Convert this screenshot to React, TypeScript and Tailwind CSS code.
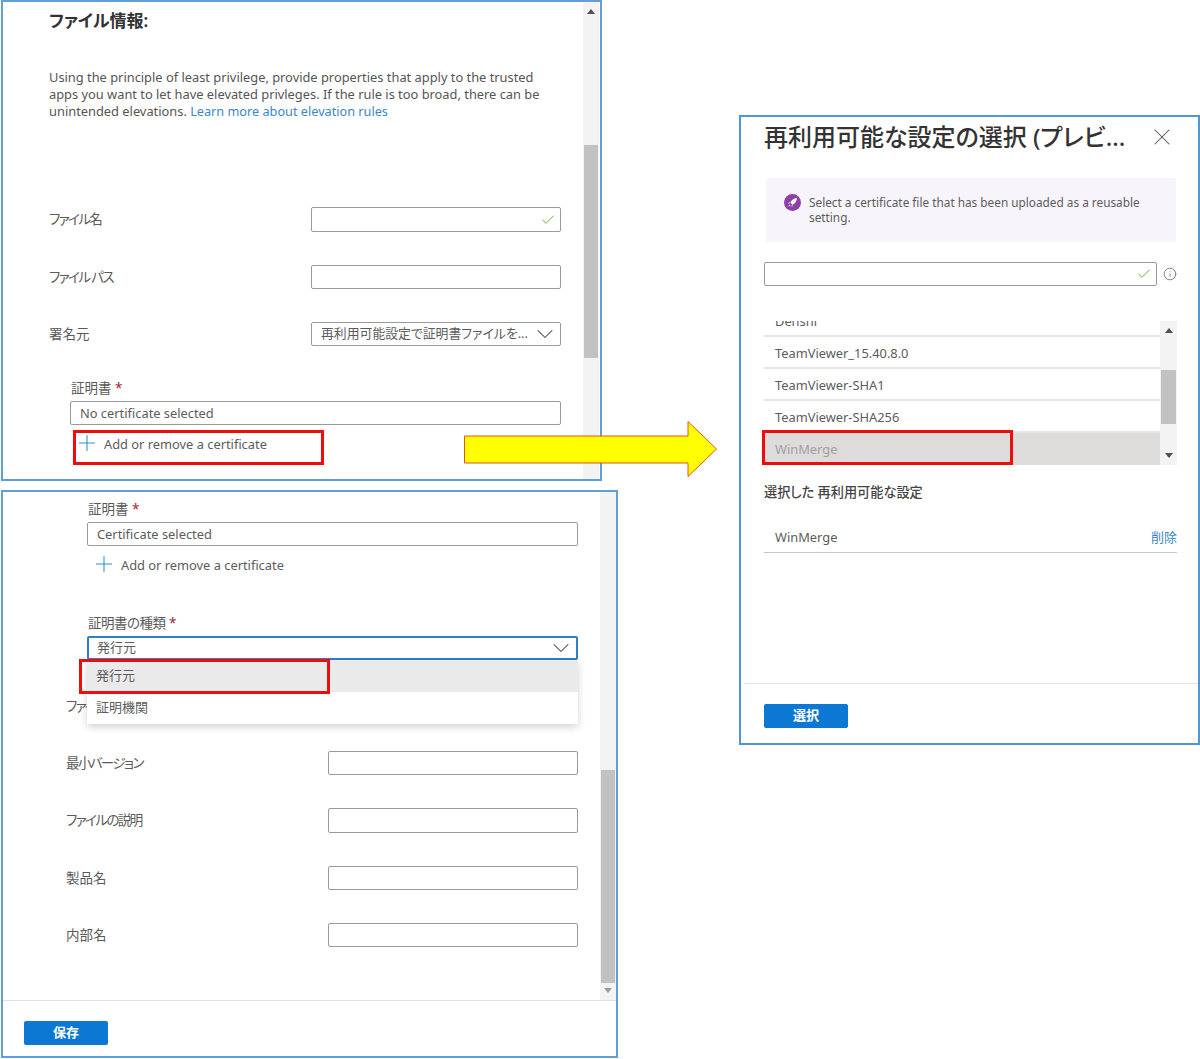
import { ReactNode } from "react"
import { Check, ChevronDown, Info, Plus, X } from "lucide-react"

const font = "font-['Noto_Sans','Noto_Sans_CJK_JP',sans-serif] [font-feature-settings:'palt']"

function TextBox({ width, check, children, height = "h-[25px]" }: { width: string, check?: boolean, children?: ReactNode, height?: string }) {
    return (
        <div className={`${width} ${height} flex items-center justify-between rounded-[2px] bg-white px-[9px] border border-[#9a9a9a]`}>
            <span className="text-[12.85px] leading-[16px] text-[#5c5c5c]">{children}</span>
            {check && <Check size={16} strokeWidth={1.5} className="text-[#6fb13f] -mr-[5px] shrink-0" />}
        </div>
    )
}

function Row({ label, tight, className, children }: { label: string, tight?: boolean, className?: string, children: ReactNode }) {
    return (
        <div className={`flex items-center justify-between ${className ?? ""}`}>
            <span className={`text-[13.5px] text-[#5a5a5a] ${tight ? "tracking-[-1.6px]" : ""}`}>{label}</span>
            {children}
        </div>
    )
}

function Required({ label, tight }: { label: string, tight?: boolean }) {
    return (
        <p className="text-[13.5px] leading-[16px] text-[#5a5a5a]">
            <span className={tight ? "tracking-[-0.5px]" : ""}>{label}</span> <span className="text-[#a4262c]">*</span>
        </p>
    )
}

function AddCertificate() {
    return (
        <div className="flex items-center h-[20px] pl-[4px] gap-[4px]">
            <Plus size={26} strokeWidth={1} className="text-[#2f8fd8] -my-[3px] -translate-y-[1px]" />
            <span className="mt-[1px] text-[12.85px] text-[#5c5c5c]">Add or remove a certificate</span>
        </div>
    )
}

function Arrow({ dir, color }: { dir: "up" | "down", color: string }) {
    return (
        <svg width="8" height="5" viewBox="0 0 8 5" className="shrink-0">
            <path d={dir === "up" ? "M4 0 L8 5 L0 5 Z" : "M0 0 L8 0 L4 5 Z"} fill={color} />
        </svg>
    )
}

function Scroll({ className, top, thumb, up, down }: { className: string, top: string, thumb: string, up?: string, down?: string }) {
    return (
        <div className={`relative shrink-0 bg-[#f3f3f3] ${className}`}>
            <div className={`absolute inset-x-[1px] bg-[#c2c2c2] ${top} ${thumb}`} />
            {up && <div className="absolute top-[7px] inset-x-0 flex justify-center"><Arrow dir="up" color={up} /></div>}
            {down && <div className="absolute bottom-[7px] inset-x-0 flex justify-center"><Arrow dir="down" color={down} /></div>}
        </div>
    )
}

function RedBox({ className }: { className: string }) {
    return <div className={`absolute border-[3px] border-[#ee0c0c] ${className}`} />
}

function BlueButton({ label }: { label: string }) {
    return (
        <div className="w-[84px] h-[24px] rounded-[2px] bg-[#0d78d4] flex items-center justify-center text-[13px] font-bold text-white">
            {label}
        </div>
    )
}

function TopPanel() {
    return (
        <div className="absolute left-[1px] top-0 w-[601px] h-[481px] border-2 border-[#5f9fd6] flex bg-white overflow-hidden">
            <div className="flex-1 pl-[46px] pr-[22px] pt-[7px]">
                <h2 className="text-[17px] leading-[24px] font-semibold text-[#323232]">ファイル情報:</h2>
                <p className="mt-[36px] text-[12.85px] leading-[17px] text-[#555] w-[500px]">
                    Using the principle of least privilege, provide properties that apply to the trusted apps you want to let have elevated privleges. If the rule is too broad, there can be unintended elevations. <span className="text-[#3a87c8] text-[12.7px]">Learn more about elevation rules</span>
                </p>
                <Row label="ファイル名" tight className="mt-[87px]"><TextBox width="w-[250px]" check /></Row>
                <Row label="ファイル パス" tight className="mt-[33px]"><TextBox width="w-[250px]" height="h-[24px]" /></Row>
                <Row label="署名元" className="mt-[33px]">
                    <div className="w-[250px] h-[24px] flex items-center justify-between rounded-[2px] border border-[#9a9a9a] pl-[9px] pr-[1px]">
                        <span className="text-[12.85px] text-[#5c5c5c] whitespace-nowrap overflow-hidden">再利用可能設定で証明書ファイルを...</span>
                        <ChevronDown size={28} strokeWidth={0.9} className="text-[#444] shrink-0 -my-[3px]" />
                    </div>
                </Row>
                <div className="ml-[21px] mt-[34px]">
                    <div className="ml-[1px]"><Required label="証明書" /></div>
                    <div className="mt-[5px]"><TextBox width="w-[491px]" height="h-[24px]">No certificate selected</TextBox></div>
                    <div className="mt-[9px]"><AddCertificate /></div>
                </div>
            </div>
            <Scroll className="w-[16px] mr-[1px]" top="top-[143px]" thumb="h-[213px]" up="#505050" />
        </div>
    )
}

function BottomPanel() {
    return (
        <div className="absolute left-[1px] top-[490px] w-[617px] h-[568px] border-2 border-[#5f9fd6] flex flex-col bg-white overflow-hidden">
            <div className="flex flex-1 min-h-0">
                <div className="flex-1 pl-[63px] pr-[22px] pt-[9px]">
                    <div className="ml-[21px]">
                        <div className="ml-[1px]"><Required label="証明書" /></div>
                        <div className="mt-[5px]"><TextBox width="w-[491px]" height="h-[24px]">Certificate selected</TextBox></div>
                        <div className="mt-[9px]"><AddCertificate /></div>
                        <div className="ml-[1px] mt-[40px]"><Required label="証明書の種類" tight /></div>
                        <div className="relative mt-[5px]">
                            <div className="w-[491px] h-[24px] flex items-center justify-between rounded-[2px] border-2 border-[#2f7fc9] pl-[8px] pr-[1px]">
                                <span className="text-[13px] text-[#5c5c5c]">発行元</span>
                                <ChevronDown size={28} strokeWidth={0.9} className="text-[#444] -my-[3px]" />
                            </div>
                            <div className="absolute z-10 left-0 top-[24px] w-[491px] bg-white shadow-[0_3px_8px_rgba(0,0,0,0.18)]">
                                <div className="h-[32px] flex items-center pl-[9px] bg-[#ebeaea] text-[13px] text-[#5c5c5c]">発行元</div>
                                <div className="h-[32px] flex items-center pl-[9px] text-[13px] text-[#5c5c5c]">証明機関</div>
                            </div>
                        </div>
                    </div>
                    <Row label="ファイ" tight className="mt-[34px]"><TextBox width="w-[250px]" height="h-[24px]" /></Row>
                    <Row label="最小バージョン" tight className="mt-[33px]"><TextBox width="w-[250px]" height="h-[24px]" /></Row>
                    <Row label="ファイルの説明" tight className="mt-[33px]"><TextBox width="w-[250px]" /></Row>
                    <Row label="製品名" className="mt-[33px]"><TextBox width="w-[250px]" height="h-[24px]" /></Row>
                    <Row label="内部名" className="mt-[33px]"><TextBox width="w-[250px]" height="h-[24px]" /></Row>
                </div>
                <Scroll className="w-[16px]" top="top-[278px]" thumb="h-[213px]" down="#9a9a9a" />
            </div>
            <div className="h-[56px] shrink-0 border-t border-[#e2e2e2] pl-[21px] pt-[20px]">
                <BlueButton label="保存" />
            </div>
        </div>
    )
}

function ListItem({ label, active }: { label: string, active?: boolean }) {
    return (
        <div className={`h-[32px] flex items-center pl-[11px] text-[12.85px] ${active ? "bg-[#dddcdb] text-[#a0a0a0] pt-[1px]" : "border-b-2 border-[#e6e6e6] text-[#5c5c5c] pt-[3px]"}`}>
            {label}
        </div>
    )
}

function SidePanel() {
    return (
        <div className="absolute left-[739px] top-[115px] w-[461px] h-[630px] border-2 border-[#4d97d8] flex flex-col bg-white overflow-hidden">
            <div className="flex-1 pl-[23px] pr-[21px] pt-[1px]">
                <div className="flex items-center justify-between h-[38px]">
                    <h1 className="text-[24px] leading-[38px] font-medium text-[#333] whitespace-nowrap">再利用可能な設定の選択 (プレビ...</h1>
                    <X size={28} strokeWidth={0.9} className="text-[#555] mr-[1px] -my-[4px] shrink-0" />
                </div>
                <div className="ml-[2px] mt-[22px] h-[64px] w-[410px] bg-[#f8f4fb] flex items-start pl-[18px] pt-[17px] gap-[8px]">
                    <svg width="17" height="17" viewBox="0 0 17 17" className="shrink-0 -mt-[1px]">
                        <circle cx="8.5" cy="8.5" r="8.5" fill="#8f3fa8" />
                        <path d="M13 4 C9.5 4.2 7.5 6 6.3 8.6 L8.4 10.7 C11 9.5 12.8 7.5 13 4 Z M5.8 9.2 L3.8 9.6 L5.4 8 Z M7.8 11.2 L7.4 13.2 L9 11.6 Z M5.6 10.4 L6.6 11.4 L4.2 12.8 Z" fill="#fff" />
                    </svg>
                    <p className="text-[11.8px] leading-[15px] text-[#5c5c5c] w-[345px]">Select a certificate file that has been uploaded as a reusable setting.</p>
                </div>
                <div className="mt-[20px] flex items-center justify-between">
                    <TextBox width="w-[393px]" height="h-[24px]" check />
                    <Info size={14} strokeWidth={1.2} className="text-[#555]" />
                </div>
                <div className="mt-[35px] h-[144px] flex overflow-hidden">
                    <div className="w-[396px] -mt-[16px] shrink-0">
                        <ListItem label="Denshi" />
                        <ListItem label="TeamViewer_15.40.8.0" />
                        <ListItem label="TeamViewer-SHA1" />
                        <ListItem label="TeamViewer-SHA256" />
                        <ListItem label="WinMerge" active />
                    </div>
                    <Scroll className="w-[17px] h-[144px]" top="top-[49px]" thumb="h-[54px]" up="#505050" down="#505050" />
                </div>
                <p className="mt-[18px] text-[13.2px] leading-[18px] font-medium text-[#444]">選択した 再利用可能な設定</p>
                <div className="mt-[19px] h-[33px] w-[413px] flex items-center justify-between pl-[11px] pt-[3px] border-b border-[#c8c8c8] text-[12.85px]">
                    <span className="text-[#5c5c5c]">WinMerge</span>
                    <span className="text-[#3a87c8] text-[13px]">削除</span>
                </div>
            </div>
            <div className="h-[60px] shrink-0 ml-[3px] border-t border-[#e4e4e4] pl-[20px] pt-[20px]">
                <BlueButton label="選択" />
            </div>
        </div>
    )
}

export default function App() {
    return (
        <div className={`relative w-[1200px] h-[1059px] bg-white overflow-hidden ${font}`}>
            <TopPanel />
            <BottomPanel />
            <SidePanel />
            <RedBox className="left-[73px] top-[430px] w-[251px] h-[35px]" />
            <RedBox className="left-[79px] top-[659px] w-[251px] h-[35px] z-20" />
            <RedBox className="left-[762px] top-[430px] w-[251px] h-[35px]" />
            <svg width="256" height="58" viewBox="0 0 256 58" className="absolute left-[463px] top-[420px]">
                <path d="M1.5 16 H225 V1.5 L253.5 29 L225 56.5 V43 H1.5 Z" fill="#ffff00" stroke="#e8501f" strokeWidth="1" />
            </svg>
        </div>
    )
}
